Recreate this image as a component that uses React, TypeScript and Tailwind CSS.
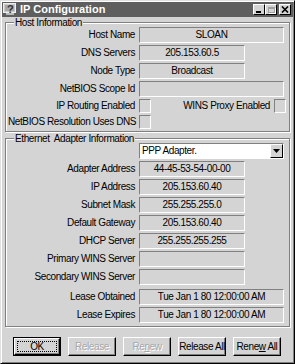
import React from 'react';

const sunken = 'border border-t-[#808080] border-l-[#808080] border-b-white border-r-white';

function Field({ label, value, w = 'w-[106px]', h = 'h-[16px]' }: { label: string; value?: string; w?: string; h?: string }) {
  return (
    <div className={`flex items-center ${h}`}>
      <div className="w-[131px] text-right pr-[4px] whitespace-nowrap">{label}</div>
      <div className={`${sunken} ${w} h-full flex items-center justify-center whitespace-nowrap`}>{value}</div>
    </div>
  );
}

function Check({ label }: { label: string }) {
  return (
    <div className="flex items-center h-[14px]">
      <div className="w-[131px] text-right pr-[4px] whitespace-nowrap">{label}</div>
      <div className={`${sunken} w-[12px] h-[14px]`} />
    </div>
  );
}

function Btn({ children, disabled, def }: { children: React.ReactNode; disabled?: boolean; def?: boolean }) {
  if (def) {
    return (
      <div className="w-[48px] h-[19px] border border-black">
        <div className="h-full w-full flex items-center justify-center border border-t-white border-l-white border-b-black border-r-black shadow-[inset_-1px_-1px_0_#808080] p-[2px]">
          <div className="w-full h-full border border-dotted border-black flex items-center justify-center leading-none">{children}</div>
        </div>
      </div>
    );
  }
  return (
    <div className="w-[48px] h-[19px]">
      <div
        className={`h-full w-full flex items-center justify-center whitespace-pre border border-t-white border-l-white border-b-black border-r-black shadow-[inset_-1px_-1px_0_#808080] ${
          disabled ? 'text-[#a8a8a8] [text-shadow:1px_1px_0_#fff]' : 'text-black'
        }`}
      >
        {children}
      </div>
    </div>
  );
}

function CapBtn({ children }: { children: React.ReactNode }) {
  return (
    <div className="w-[12px] h-[11px] bg-[#d4d4d4] border border-t-white border-l-white border-b-black border-r-black flex items-center justify-center">
      {children}
    </div>
  );
}

export default function App() {
  return (
    <div className="w-[295px] h-[364px] bg-[#d4d4d4] border border-t-[#e0e0e0] border-l-[#e0e0e0] border-b-black border-r-black shadow-[inset_1px_1px_0_#fff,inset_-1px_-1px_0_#808080] p-[1px] font-['Liberation_Sans',Arial,sans-serif] text-[10px] tracking-[-0.4px] text-black leading-none flex flex-col overflow-hidden">
      <div className="h-[15px] bg-[#5e5e5e] flex items-center pl-[1px] pr-[2px] shrink-0">
        <div className="w-[14px] h-[13px] relative shrink-0">
          <svg width="14" height="13" viewBox="0 0 14 13">
            <rect x="0.5" y="0.5" width="12" height="9" fill="#c8c8c8" stroke="#f0f0f0" />
            <rect x="2" y="2" width="9" height="6" fill="#a8a8a8" />
            <rect x="3" y="10" width="8" height="2" fill="#b8b8b8" />
          </svg>
          <span className="absolute left-[4px] top-[1px] text-[11px] font-bold text-[#303030]">?</span>
        </div>
        <div className="ml-[3px] text-white font-bold text-[11px] tracking-normal">IP Configuration</div>
        <div className="ml-auto flex items-center">
          <CapBtn>
            <div className="w-[5px] h-[2px] bg-black mt-[5px] -ml-[1px]" />
          </CapBtn>
          <CapBtn>
            <div className="w-[7px] h-[6px] border border-[#a0a0a0] border-t-2 shadow-[1px_1px_0_#fff]" />
          </CapBtn>
          <div className="w-[2px]" />
          <CapBtn>
            <svg width="8" height="7" viewBox="0 0 8 7">
              <path d="M1 0.5 L7 6.5 M7 0.5 L1 6.5" stroke="black" strokeWidth="1.6" />
            </svg>
          </CapBtn>
        </div>
      </div>

      <fieldset className="mx-[3px] border border-[#808080] shadow-[inset_1px_1px_0_#fff,1px_1px_0_#fff] px-[2px] pb-[2px]">
        <legend className="ml-[6px] px-[1px] bg-[#d4d4d4] h-[10px] leading-[10px] pt-[1px]">Host Information</legend>
        <div className="flex flex-col gap-[2px]">
          <Field label="Host Name" value="SLOAN" w="w-[145px]" />
          <Field label="DNS Servers" value="205.153.60.5" />
          <Field label="Node Type" value="Broadcast" />
          <Field label="NetBIOS Scope Id" value="" w="w-[145px]" />
          <div className="flex items-center h-[14px]">
            <div className="w-[131px] text-right pr-[4px] whitespace-nowrap">IP Routing Enabled</div>
            <div className={`${sunken} w-[12px] h-[14px]`} />
            <div className="flex-1 text-right pr-[4px] whitespace-nowrap">WINS Proxy Enabled</div>
            <div className={`${sunken} w-[12px] h-[14px] mr-[1px]`} />
          </div>
          <Check label="NetBIOS Resolution Uses DNS" />
        </div>
      </fieldset>

      <fieldset className="mx-[3px] mt-[1px] border border-[#808080] shadow-[inset_1px_1px_0_#fff,1px_1px_0_#fff] px-[2px] pb-[3px]">
        <legend className="ml-[6px] px-[1px] bg-[#d4d4d4] h-[10px] leading-[10px] pt-[1px]">Ethernet&nbsp; Adapter Information</legend>
        <div className="flex flex-col gap-[2px]">
          <div className="flex items-center h-[16px]">
            <div className="w-[131px]" />
            <div className={`${sunken} w-[145px] h-full bg-white flex items-center`}>
              <div className="flex-1 pl-[2px] whitespace-nowrap">PPP Adapter.</div>
              <div className="w-[13px] h-full bg-[#d4d4d4] border border-t-white border-l-white border-b-black border-r-black flex items-center justify-center">
                <svg width="7" height="4" viewBox="0 0 7 4">
                  <path d="M0 0 H7 L3.5 4 Z" fill="black" />
                </svg>
              </div>
            </div>
          </div>
          <Field label="Adapter Address" value="44-45-53-54-00-00" />
          <Field label="IP Address" value="205.153.60.40" />
          <Field label="Subnet Mask" value="255.255.255.0" />
          <Field label="Default Gateway" value="205.153.60.40" />
          <Field label="DHCP Server" value="255.255.255.255" />
          <Field label="Primary WINS Server" value="" />
          <Field label="Secondary WINS Server" value="" />
          <div className="mt-[2px] flex flex-col gap-[2px]">
            <Field label="Lease Obtained" value="Tue Jan 1 80 12:00:00 AM" w="w-[145px]" />
            <Field label="Lease Expires" value="Tue Jan 1 80 12:00:00 AM" w="w-[145px]" />
          </div>
        </div>
      </fieldset>

      <div className="mt-[10px] pl-[11px] flex gap-[7px]">
        <Btn def>OK</Btn>
        <Btn disabled>Release</Btn>
        <Btn disabled>
          Re<span className="underline">n</span>ew
        </Btn>
        <Btn>Release All</Btn>
        <Btn>
          Rene<span className="underline">w</span> All
        </Btn>
      </div>
    </div>
  );
}
